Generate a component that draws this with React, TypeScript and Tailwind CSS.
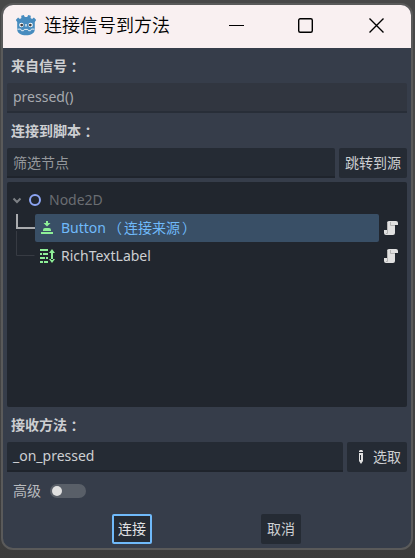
import React from "react";

const Script = () => (
  <svg width="16" height="16" viewBox="0 0 16 16" className="shrink-0">
    <path d="M6 1h7a2 2 0 0 1 2 2v2h-3v8a2 2 0 0 1-2 2H3a2 2 0 0 1-2-2v-3h3V3a2 2 0 0 1 2-2z" fill="#e0e0e0" />
    <path d="M4.500 3v10.500H3M7.500 2v3.500H12" fill="none" stroke="#b4b4b4" />
  </svg>
);

const Godot = () => (
  <svg width="22" height="22" viewBox="0 0 22 22" className="mt-[9px] shrink-0">
    <path
      d="M8.8 1 6.2 1.800l.2 2.300-1.500.9-1.800-1.400L.8 6l1.400 2.100v7.300c0 3.800 4 5.800 8.800 5.800s8.800-2 8.800-5.800V8.100L21.200 6l-2.300-2.400L17.100 5l-1.500-.9.2-2.300-2.600-.8-1 2H9.800z"
      fill="#478cbf"
    />
    <path d="M2.500 15.200 5.500 15l1 1.700h2l.8-1.300h3.400l.8 1.300h2l1-1.700 3 .2" fill="none" stroke="#e8f0f6" strokeWidth="1" />
    <circle cx="6.4" cy="11" r="2.2" fill="#fff" />
    <circle cx="15.6" cy="11" r="2.2" fill="#fff" />
    <circle cx="6.7" cy="11.1" r="1.4" fill="#414042" />
    <circle cx="15.3" cy="11.1" r="1.4" fill="#414042" />
    <path d="M11 10v2.600" stroke="#fff" strokeWidth="1.2" />
  </svg>
);

const Label = ({ children }: { children: string }) => (
  <div className="flex h-[35px] items-center pl-1 font-bold text-[#cdcfd2]">
    {children}
    <span className="font-['Noto_Sans_CJK_TC',sans-serif] leading-none" lang="zh-TW">：</span>
  </div>
);

export default function App() {
  return (
    <div className="h-[558px] w-[415px] bg-linear-to-b from-[#484848] via-[#484848] to-[#3b3b3b] px-px pt-[3px] font-['Noto_Sans','Noto_Sans_CJK_SC',sans-serif] text-[14px] leading-5 whitespace-nowrap">
      <div className="flex h-[547px] w-[412px] flex-col overflow-hidden rounded-[12px] border-2 border-[#5a5a5a] bg-[#363d4a]">
        <header className="flex h-[43px] shrink-0 items-start bg-[#f9f0f1] pl-3 text-black">
          <Godot />
          <h1 className="mt-[7px] ml-[7px] w-[185px] font-['Noto_Sans_CJK_SC',sans-serif] text-[18px] leading-6 font-[350]">连接信号到方法</h1>
          <svg width="156" height="15" viewBox="0 0 156 15" fill="none" stroke="#000" className="mt-[13px]">
            <path d="M0 7.500h15" />
            <rect x="69.700" y=".7" width="13.600" height="13.600" rx="1.500" strokeWidth="1.400" />
            <path d="m140.500.5 14 14m0-14-14 14" strokeWidth="1.400" />
          </svg>
        </header>

        <main className="flex min-h-0 flex-1 flex-col px-1">
          <Label>来自信号</Label>
          <div className="flex h-[30px] items-center rounded-t-[2px] border-b-2 border-[#282e38] bg-[#313640] pl-1.5 text-[#a7aaaf]">pressed()</div>
          <Label>连接到脚本</Label>
          <div className="flex h-[30px] gap-1">
            <div className="flex w-[328px] items-center rounded-t-[2px] border-b-2 border-[#1f242c] bg-[#252b34] pt-0.5 pl-1.5 text-[#94979b]">筛选节点</div>
            <button className="w-[68px] rounded-[2px] bg-[#252b34] text-[#cdcfd2]">跳转到源</button>
          </div>

          <div className="relative mt-1 h-[225px] rounded-[2px] bg-[#21262e] pt-1 pr-2 pl-1">
            <div className="flex h-7 items-center text-[#6a6d72]">
              <svg width="12" height="12" viewBox="0 0 12 12" fill="none" stroke="#7d8085" strokeWidth="2">
                <path d="m2.500 4.500 3.500 3.500 3.500-3.500" />
              </svg>
              <svg width="16" height="16" viewBox="0 0 16 16" className="ml-1">
                <circle cx="8" cy="8" r="5" fill="none" stroke="#8da5f3" strokeWidth="2" />
              </svg>
              <span className="ml-1.5">Node2D</span>
            </div>
            <div className="flex h-7 items-center justify-between pl-6">
              <div className="flex h-7 w-[344px] items-center rounded-[2px] bg-[#394f66] pl-1 text-[#70bafa]">
                <svg width="16" height="16" viewBox="0 0 16 16" fill="#8eef97">
                  <path d="M7 1h2v2h2.500L8 6.500 4.500 3H7zM4 10a2 2 0 0 1 2-2h4a2 2 0 0 1 2 2v1H4zM2 12h12v2H2z" />
                </svg>
                <span className="ml-1.5 w-[47px]">Button</span>
                <span className="w-4">（</span>
                <span className="w-[58px]">连接来源</span>
                <span>）</span>
              </div>
              <Script />
            </div>
            <div className="flex h-7 items-center justify-between pl-7 text-[#cdcfd2]">
              <div className="flex items-center">
                <svg width="16" height="16" viewBox="0 0 16 16" fill="#8eef97">
                  <path d="M1 1h8v2H1zM1 5h2v2H1zM4 5h5v2H4zM1 9h5v2H1zM7 9h2v2H7zM1 13h3v2H1zM5 13h4v2H5zM12 4h2v8h-2zM13 1l3 4h-6zM13 15l3-4h-6z" />
                </svg>
                <span className="ml-1.5">RichTextLabel</span>
              </div>
              <Script />
            </div>
            <svg width="20" height="44" viewBox="0 0 20 44" fill="none" className="absolute top-8 left-2">
              <path d="M2 0v14h18" stroke="#a9abae" strokeWidth="2" />
              <path d="M1.500 17v24.500h18" stroke="#373b43" />
            </svg>
          </div>

          <Label>接收方法</Label>
          <div className="flex h-[30px] gap-1">
            <div className="flex w-[336px] items-center rounded-t-[2px] border-b-2 border-[#1f242c] bg-[#252b34] pl-1.5 text-[#cdcfd2]">_on_pressed</div>
            <button className="flex w-[60px] items-center rounded-[2px] bg-[#252b34] pl-1.5 text-[#cdcfd2]">
              <svg width="16" height="16" viewBox="0 0 16 16" fill="#e0e0e0">
                <path d="M7 1h2l1 1v1H6V2zM6 4h4v8l-2 3-2-3zM7 6v5h1V6z" fillRule="evenodd" />
              </svg>
              <span className="ml-1">选取</span>
            </button>
          </div>
          <div className="mt-1 flex h-[30px] items-center pl-1.5 text-[#b9bbbf]">
            <span>高级</span>
            <span className="ml-[9px] flex h-3.5 w-9 items-center rounded-full bg-[#595f68] pl-0.5">
              <span className="size-2.5 rounded-full bg-[#e0e0e0]" />
            </span>
          </div>
          <footer className="mt-2 flex h-[30px] gap-[109px] pl-[105px]">
            <button className="w-10 rounded-[2px] border-2 border-[#70bafa] bg-[#252b34] text-[#e0e1e3]">连接</button>
            <button className="w-10 rounded-[2px] bg-[#252b34] text-[#cdcfd2]">取消</button>
          </footer>
        </main>
      </div>
    </div>
  );
}
